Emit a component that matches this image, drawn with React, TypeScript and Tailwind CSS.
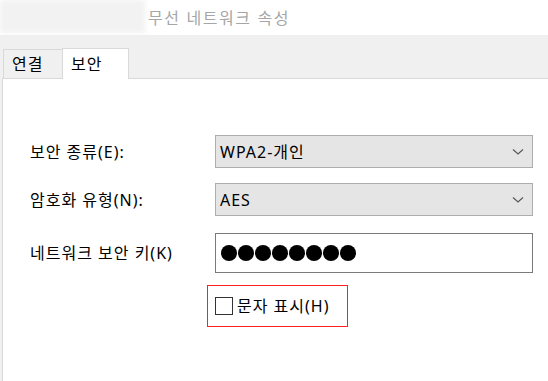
import React from "react";

const F = { fontFamily: '"Noto Sans", "Noto Sans CJK KR", sans-serif' } as React.CSSProperties;

function Chevron() {
  return (
    <svg width="12" height="8" viewBox="0 0 12 8" className="mr-[8px]">
      <path d="M1 1.5 L6 6 L11 1.5" fill="none" stroke="#555" strokeWidth="1.1" />
    </svg>
  );
}

export default function App() {
  return (
    <div className="w-[548px] h-[381px] overflow-hidden bg-[#f0f0f0] flex flex-col" style={F}>
      <div className="h-[35px] bg-white flex items-center shrink-0">
        <div className="w-[145px] h-[33px] self-start bg-[#f2f2f2] blur-[2px]" />
        <span className="ml-[3px] text-[16px] text-[#a6a6a6] tracking-[1.6px]">무선 네트워크 속성</span>
      </div>
      <div className="flex items-end pl-[3px] pt-[12px] h-[43px] shrink-0">
        <div className="w-[60px] h-[29px] border border-b-0 border-[#d9d9d9] bg-[#f0f0f0] text-[16px] tracking-[1px] text-black pl-[8px] flex items-center">연결</div>
        <div className="w-[67px] h-[31px] border border-b-0 border-[#d9d9d9] bg-white text-[16px] tracking-[1px] text-black pl-[8px] flex items-center -ml-px relative z-10 -mb-px">보안</div>
      </div>
      <div className="flex-1 ml-[2px] bg-white border-l border-t border-[#d9d9d9] pt-[56px] text-[16px] tracking-[1px] text-black">
        <div className="flex items-center h-[33px]">
          <div className="w-[212px] pl-[27px]">보안 종류(E):</div>
          <div className="w-[318px] h-[33px] bg-[#e5e5e5] border border-[#adadad] flex items-center justify-between pl-[4px]">
            <span>WPA2-개인</span>
            <Chevron />
          </div>
        </div>
        <div className="flex items-center h-[33px] mt-[15px]">
          <div className="w-[212px] pl-[27px]">암호화 유형(N):</div>
          <div className="w-[318px] h-[33px] bg-[#e5e5e5] border border-[#adadad] flex items-center justify-between pl-[4px]">
            <span>AES</span>
            <Chevron />
          </div>
        </div>
        <div className="flex items-center h-[40px] mt-[17px]">
          <div className="w-[212px] pl-[27px]">네트워크 보안 키(K)</div>
          <div className="w-[318px] h-[40px] bg-white border border-[#7a7a7a] flex items-center pl-[5px] gap-[1px]">
            {Array.from({ length: 8 }).map((_, i) => (
              <span key={i} className="w-[16px] h-[16px] rounded-full bg-black inline-block" />
            ))}
          </div>
        </div>
        <div className="ml-[204px] mt-[12px] w-[141px] h-[42px] border-[1.5px] border-[#ff2020] flex items-center pl-[7px]">
          <span className="w-[18px] h-[18px] border border-[#333] bg-white inline-block" />
          <span className="ml-[4px]">문자 표시(H)</span>
        </div>
      </div>
    </div>
  );
}
